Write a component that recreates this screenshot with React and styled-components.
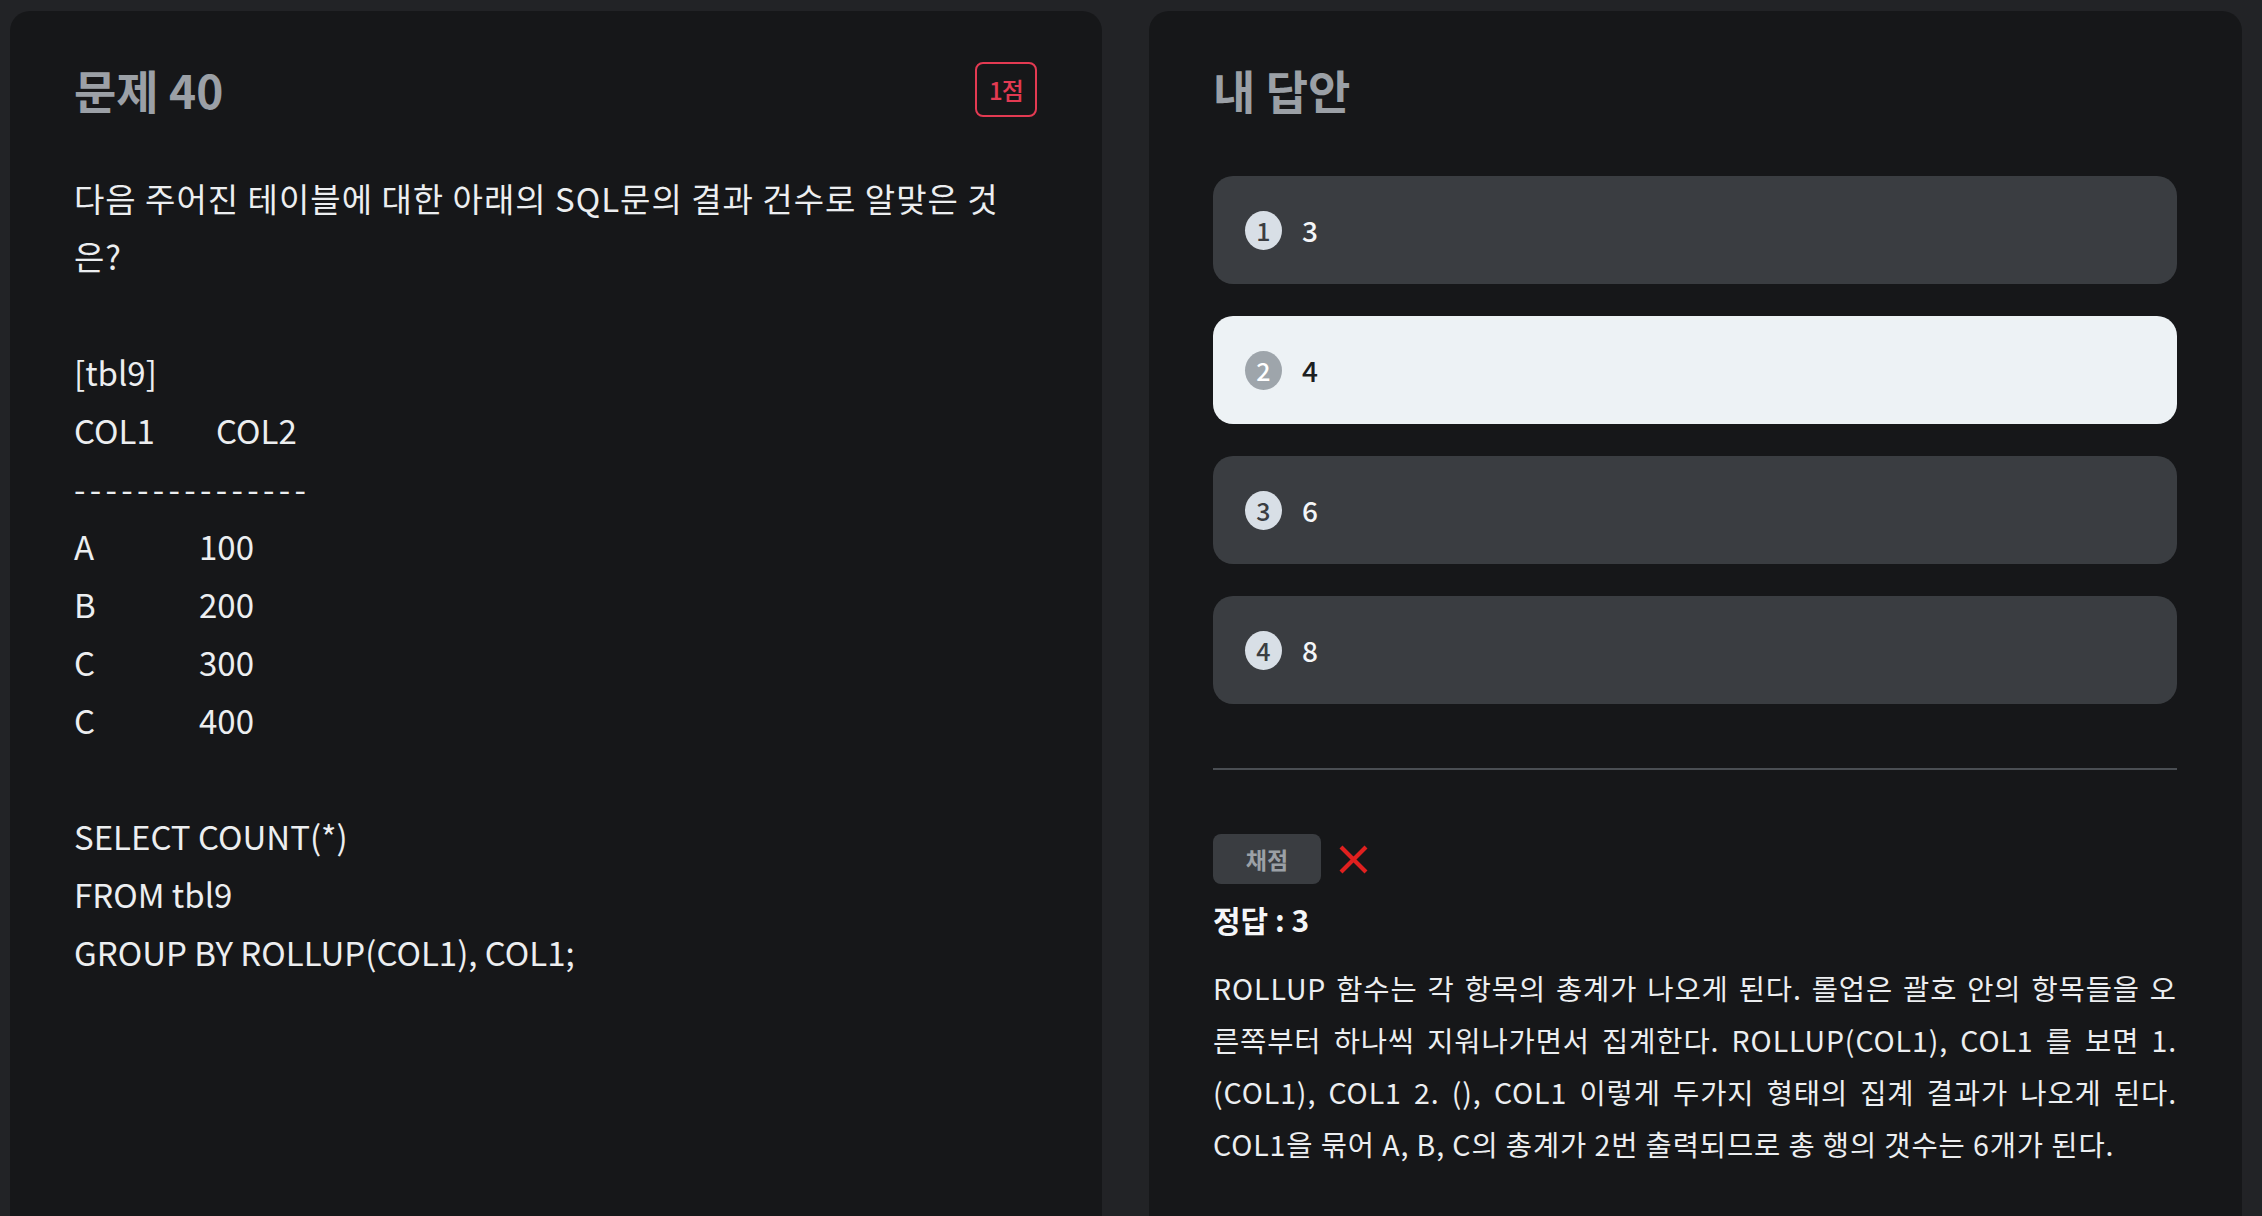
import React from "react";
import styled, { createGlobalStyle } from "styled-components";

const GlobalStyle = createGlobalStyle`
  html, body {
    margin: 0;
    padding: 0;
    background: #222326;
    overflow: hidden;
  }
  body {
    font-family: "Noto Sans CJK KR", "Noto Sans", sans-serif;
    color: #eceef0;
  }
`;

const Page = styled.div`
  display: grid;
  grid-template-columns: 1092px 1093px;
  gap: 47px;
  padding: 11px 20px 0 10px;
  height: 1216px;
  box-sizing: border-box;
`;

const Panel = styled.section`
  background: #161719;
  border-radius: 20px 20px 0 0;
  padding: 46px 65px 0 64px;
  min-height: 1300px;
  box-sizing: border-box;
`;

const Header = styled.div`
  display: flex;
  align-items: center;
  justify-content: space-between;
  height: 64px;
`;

const Title = styled.h2`
  margin: 0;
  font-size: 46px;
  font-weight: 700;
  color: #9ba0a6;
`;

const Badge = styled.span`
  display: flex;
  align-items: center;
  justify-content: center;
  width: 62px;
  height: 55px;
  box-sizing: border-box;
  border: 2px solid #e33a52;
  border-radius: 8px;
  color: #e33a52;
  font-size: 24px;
  font-weight: 500;
  letter-spacing: -1px;
`;

const Question = styled.div`
  margin-top: 48px;
  max-width: 945px;
  font-size: 33px;
  line-height: 58px;
  color: #eceef0;
`;

const Line = styled.div`
  min-height: 58px;
  letter-spacing: ${(p) => (p.$wide ? "1px" : "0")};
`;

const Dashes = styled.div`
  letter-spacing: 4.3px;
`;

const Row = styled.div`
  display: flex;
`;

const Cell = styled.span`
  display: inline-block;
  width: ${(p) => p.$w}px;
`;

const Options = styled.div`
  display: flex;
  flex-direction: column;
  gap: 32px;
  margin-top: 55px;
`;

const Option = styled.div`
  display: flex;
  align-items: center;
  gap: 20px;
  height: 108px;
  padding: 0 32px;
  border-radius: 20px;
  background: ${(p) => (p.$selected ? "#edf2f5" : "#3a3d41")};
  color: ${(p) => (p.$selected ? "#1d1f22" : "#f4f6f8")};
  font-size: 28px;
  font-weight: 500;
`;

const Num = styled.span`
  display: flex;
  align-items: center;
  justify-content: center;
  width: 37px;
  height: 39px;
  border-radius: 50%;
  background: ${(p) => (p.$selected ? "#9ea5ab" : "#d8dfe6")};
  color: ${(p) => (p.$selected ? "#ffffff" : "#3a3d41")};
  font-size: 25px;
  font-weight: 500;
`;

const Divider = styled.hr`
  margin: 64px 0 0;
  border: none;
  border-top: 2px solid #4a4e53;
`;

const Grade = styled.div`
  display: flex;
  align-items: center;
  gap: 17px;
  margin-top: 64px;
`;

const GradeButton = styled.button`
  width: 108px;
  height: 50px;
  border: none;
  border-radius: 8px;
  background: #3a3d41;
  color: #9ba0a6;
  font-family: inherit;
  font-size: 23px;
  font-weight: 700;
`;

const Answer = styled.div`
  margin-top: 10px;
  font-size: 30px;
  font-weight: 700;
  color: #f4f6f8;
  line-height: 50px;
`;

const Explain = styled.div`
  margin-top: 18px;
  font-size: 28.5px;
  line-height: 52px;
  color: #eceef0;
  letter-spacing: 0.9px;
`;

const ExplainLine = styled.div`
  white-space: nowrap;
  text-align: justify;
  text-align-last: ${(p) => (p.$last ? "left" : "justify")};
`;

const WrongMark = () => (
  <svg width="31" height="31" viewBox="0 0 31 31">
    <path d="M3 3 L28 28 M28 3 L3 28" stroke="#e0201f" strokeWidth="4.2" fill="none" />
  </svg>
);

const options = [
  { n: 1, text: "3" },
  { n: 2, text: "4", selected: true },
  { n: 3, text: "6" },
  { n: 4, text: "8" },
];

const tableRows = [
  ["A", "100"],
  ["B", "200"],
  ["C", "300"],
  ["C", "400"],
];

const explainLines = [
  "ROLLUP 함수는 각 항목의 총계가 나오게 된다. 롤업은 괄호 안의 항목들을 오",
  "른쪽부터 하나씩 지워나가면서 집계한다. ROLLUP(COL1), COL1 를 보면 1.",
  "(COL1), COL1 2. (), COL1 이렇게 두가지 형태의 집계 결과가 나오게 된다.",
  "COL1을 묶어 A, B, C의 총계가 2번 출력되므로 총 행의 갯수는 6개가 된다.",
];

export default function App() {
  return (
    <>
      <GlobalStyle />
      <Page>
        <Panel>
          <Header>
            <Title>문제 40</Title>
            <Badge>1점</Badge>
          </Header>
          <Question>
            <Line $wide>다음 주어진 테이블에 대한 아래의 SQL문의 결과 건수로 알맞은 것은?</Line>
            <Line />
            <Line>[tbl9]</Line>
            <Row>
              <Cell $w={142}>COL1</Cell>COL2
            </Row>
            <Dashes>---------------</Dashes>
            {tableRows.map(([a, b], i) => (
              <Row key={i}>
                <Cell $w={125}>{a}</Cell>
                {b}
              </Row>
            ))}
            <Line />
            <Line>SELECT COUNT(*)</Line>
            <Line>FROM tbl9</Line>
            <Line>GROUP BY ROLLUP(COL1), COL1;</Line>
          </Question>
        </Panel>
        <Panel>
          <Header>
            <Title>내 답안</Title>
          </Header>
          <Options>
            {options.map((o) => (
              <Option key={o.n} $selected={o.selected}>
                <Num $selected={o.selected}>{o.n}</Num>
                {o.text}
              </Option>
            ))}
          </Options>
          <Divider />
          <Grade>
            <GradeButton>채점</GradeButton>
            <WrongMark />
          </Grade>
          <Answer>정답 : 3</Answer>
          <Explain>
            {explainLines.map((l, i) => (
              <ExplainLine key={i} $last={i === explainLines.length - 1}>
                {l}
              </ExplainLine>
            ))}
          </Explain>
        </Panel>
      </Page>
    </>
  );
}
